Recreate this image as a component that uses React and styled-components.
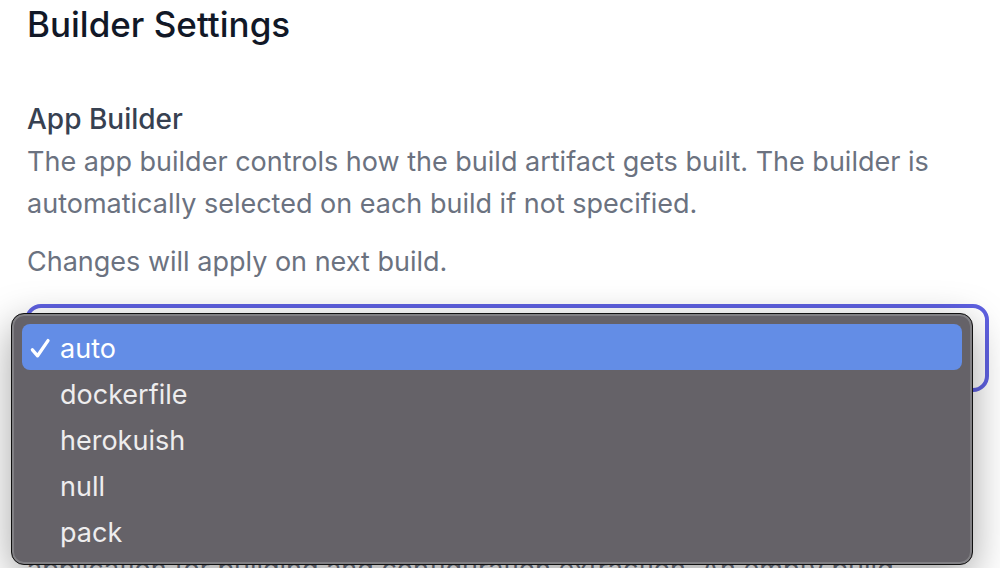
import React, { useState } from "react";
import styled, { createGlobalStyle } from "styled-components";

const GlobalStyle = createGlobalStyle`
  *, *::before, *::after { box-sizing: border-box; }
  body {
    margin: 0;
    background: #fff;
    font-family: Inter, "Liberation Sans", sans-serif;
  }
`;

const Page = styled.main`
  height: 100vh;
  overflow: hidden;
  padding: 0 11px 0 27px;
`;

const Title = styled.h1`
  margin: 0 0 50px;
  color: #111827;
  font-size: 35px;
  font-weight: 500;
  line-height: 48px;
`;

const Label = styled.label`
  display: block;
  color: #374151;
  font-size: 28px;
  font-weight: 500;
  line-height: 43px;
`;

const Text = styled.p`
  margin: 0 0 16px;
  color: #6b7280;
  font-size: 27px;
  line-height: 42px;
`;

const Field = styled.div`
  position: relative;
  margin: 21px 0 156px -2px;
`;

const Select = styled.select`
  display: block;
  appearance: none;
  width: 100%;
  height: 88px;
  padding: 0 24px;
  border: 4px solid #5f61e2;
  border-radius: 16px;
  outline: none;
  background: #fff;
  color: #111827;
  font: inherit;
  font-size: 28px;
`;

const Menu = styled.div`
  position: absolute;
  top: 9px;
  left: -14px;
  right: 16px;
  padding: 10px;
  border: 1px solid #111;
  border-radius: 13px;
  background: #656268;
  box-shadow: inset 0 0 0 2px #818084, 0 12px 40px rgba(0, 0, 0, 0.36);
`;

const Option = styled.button`
  display: flex;
  align-items: center;
  width: 100%;
  height: 46px;
  padding: 4px 8px 0;
  gap: 8px;
  border: 0;
  border-radius: 8px;
  background: ${(p) => (p.$active ? "#638de6" : "transparent")};
  color: ${(p) => (p.$active ? "#fff" : "#eeedee")};
  font: inherit;
  font-size: 27px;
  line-height: 42px;
  text-align: left;
`;

const CheckSlot = styled.span`
  display: flex;
  flex: none;
  width: 22px;
`;

const builders = ["auto", "dockerfile", "herokuish", "null", "pack"];

function CheckMark() {
  return (
    <svg width="22" height="22" viewBox="0 0 22 22" fill="none" aria-hidden="true">
      <path d="M2.4 11.8 L7.6 17.8 L18 2.6" stroke="#fff" strokeWidth="3.3" strokeLinecap="round" strokeLinejoin="round" />
    </svg>
  );
}

export default function App() {
  const [builder, setBuilder] = useState("auto");
  return (
    <Page>
      <GlobalStyle />
      <Title>Builder Settings</Title>
      <Label htmlFor="builder">App Builder</Label>
      <Text>
        The app builder controls how the build artifact gets built. The builder is
        automatically selected on each build if not specified.
      </Text>
      <Text>Changes will apply on next build.</Text>
      <Field>
        <Select id="builder" value={builder} onChange={(e) => setBuilder(e.target.value)}>
          {builders.map((name) => (
            <option key={name}>{name}</option>
          ))}
        </Select>
        <Menu role="listbox" aria-label="App Builder">
          {builders.map((name) => (
            <Option
              key={name}
              type="button"
              role="option"
              aria-selected={name === builder}
              $active={name === builder}
              onClick={() => setBuilder(name)}
            >
              <CheckSlot>{name === builder && <CheckMark />}</CheckSlot>
              {name}
            </Option>
          ))}
        </Menu>
      </Field>
      <Text>application for building and configuration extraction. An empty build</Text>
    </Page>
  );
}
